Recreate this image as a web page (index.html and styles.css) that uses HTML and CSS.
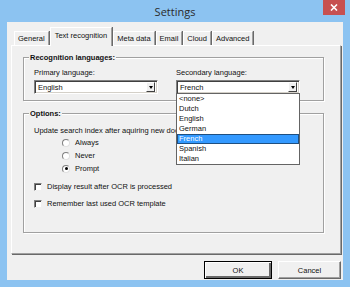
FILE: index.html
```html
<!DOCTYPE html>
<html lang="en">
<head>
  <meta charset="UTF-8">
  <meta name="viewport" content="width=device-width, initial-scale=1.0">
  <title>Settings</title>
  <link rel="stylesheet" href="styles.css">
</head>
<body>
  <div class="window">
    <div class="titlebar">
      <span class="title">Settings</span>
      <button class="close" aria-label="Close">
        <svg width="8" height="7" viewBox="0 0 8 7"><path d="M1 0.5 L7 6.5 M7 0.5 L1 6.5" stroke="#fff" stroke-width="1.6"/></svg>
      </button>
    </div>

    <div class="client">
      <div class="tabs">
        <div class="tab">General</div>
        <div class="tab active">Text recognition</div>
        <div class="tab">Meta data</div>
        <div class="tab">Email</div>
        <div class="tab">Cloud</div>
        <div class="tab">Advanced</div>
      </div>

      <div class="panel">
        <fieldset class="group languages">
          <legend>Recognition languages:</legend>
          <div class="lang-row">
            <div class="field">
              <label>Primary language:</label>
              <div class="combo">
                <span class="combo-value">English</span>
                <span class="combo-arrow"></span>
              </div>
            </div>
            <div class="field">
              <label>Secondary language:</label>
              <div class="combo open">
                <span class="combo-value">French</span>
                <span class="combo-arrow"></span>
                <ul class="dropdown">
                  <li>&lt;none&gt;</li>
                  <li>Dutch</li>
                  <li>English</li>
                  <li>German</li>
                  <li class="selected">French</li>
                  <li>Spanish</li>
                  <li>Italian</li>
                </ul>
              </div>
            </div>
          </div>
        </fieldset>

        <fieldset class="group options">
          <legend>Options:</legend>
          <p class="hint">Update search index after aquiring new documents:</p>
          <div class="radios">
            <label class="radio"><span class="dot"></span>Always</label>
            <label class="radio"><span class="dot"></span>Never</label>
            <label class="radio"><span class="dot checked"></span>Prompt</label>
          </div>
          <label class="check"><span class="box"></span>Display result after OCR is processed</label>
          <label class="check"><span class="box"></span>Remember last used OCR template</label>
        </fieldset>
      </div>

      <div class="actions">
        <button class="btn default">OK</button>
        <button class="btn">Cancel</button>
      </div>
    </div>
  </div>
</body>
</html>
```

FILE: styles.css
```css
/* Window frame */
body {
  margin: 0;
  background-color: #8cc3f1;
  font-family: "Liberation Sans", Arial, sans-serif;
  font-size: 7.5px;
  color: #111;
}

.window {
  width: 350px;
  height: 287px;
  display: flex;
  flex-direction: column;
}

.titlebar {
  height: 22px;
  display: grid;
  grid-template-columns: 1fr auto 1fr;
  align-items: center;
}

.title {
  grid-column: 2;
  font-family: "Open Sans", sans-serif;
  font-size: 11px;
  color: #2b2b2b;
  padding-top: 1px;
}

.close {
  grid-column: 3;
  justify-self: end;
  align-self: start;
  width: 22px;
  height: 15px;
  margin-right: 5px;
  padding: 0;
  border: none;
  background-color: #c75050;
  display: flex;
  align-items: center;
  justify-content: center;
}

.client {
  margin: 0 7px;
  height: 258px;
  background-color: #f0f0f0;
  padding: 5px 2px 0 4px;
  box-sizing: border-box;
}

/* Tabs */
.tabs {
  display: flex;
  align-items: flex-end;
  height: 18px;
  padding-left: 3px;
  position: relative;
  z-index: 1;
}

.tab {
  height: 13px;
  line-height: 13px;
  padding: 0 3px;
  border-top: 1px solid #fff;
  border-left: 1px solid #fff;
  border-right: 1px solid #a0a0a0;
  box-shadow: 1px 0 0 #696969;
  margin-right: 1px;
}

.tab.active {
  height: 18px;
  line-height: 16px;
  padding: 0 4px;
  margin-bottom: -1px;
  background-color: #f0f0f0;
}

.panel {
  height: 209px;
  box-sizing: border-box;
  border-top: 1px solid #fff;
  border-left: 1px solid #fff;
  border-right: 1px solid #a0a0a0;
  border-bottom: 1px solid #a0a0a0;
  box-shadow: 1px 1px 0 #696969;
  padding: 7px 16px 0 11px;
}

/* Group boxes */
.group {
  margin: 0;
  padding: 0 0 0 10px;
  border: 1px solid #a0a0a0;
  box-shadow: 1px 1px 0 #fff, inset 1px 1px 0 #fff;
  min-width: 0;
}

.group legend {
  font-weight: bold;
  padding: 0 1px;
  margin-left: -5px;
  line-height: 9px;
  background-color: #f0f0f0;
}

.languages {
  height: 48px;
  box-sizing: border-box;
}

.lang-row {
  display: flex;
  gap: 18px;
  padding-top: 6px;
}

.field label {
  display: block;
  line-height: 9px;
  margin-bottom: 3px;
}

.combo {
  position: relative;
  width: 124px;
  height: 14px;
  box-sizing: border-box;
  background-color: #fff;
  border-top: 1px solid #808080;
  border-left: 1px solid #808080;
  border-right: 1px solid #fff;
  border-bottom: 1px solid #fff;
  box-shadow: inset 1px 1px 0 #404040, inset -1px -1px 0 #d4d0c8;
  display: flex;
  align-items: center;
  justify-content: space-between;
  padding: 0 2px 0 3px;
}

.combo-arrow {
  width: 9px;
  height: 10px;
  box-sizing: border-box;
  background-color: #f0f0f0;
  border-top: 1px solid #fff;
  border-left: 1px solid #fff;
  border-right: 1px solid #404040;
  border-bottom: 1px solid #404040;
  display: flex;
  align-items: center;
  justify-content: center;
}

.combo-arrow::after {
  content: "";
  border-left: 2.5px solid transparent;
  border-right: 2.5px solid transparent;
  border-top: 3px solid #000;
}

.dropdown {
  position: absolute;
  top: 100%;
  left: -1px;
  width: 124px;
  box-sizing: border-box;
  margin: 0;
  padding: 0;
  list-style: none;
  background-color: #fff;
  border: 1px solid #646464;
  z-index: 5;
}

.dropdown li {
  height: 10px;
  line-height: 10px;
  padding-left: 2px;
}

.dropdown li.selected {
  background-color: #3399ff;
  color: #fff;
  box-shadow: inset 0 0 0 1px #1f4f80;
}

.options {
  margin-top: 8px;
  height: 124px;
  box-sizing: border-box;
}

.hint {
  margin: 8px 0 0;
  line-height: 9px;
  white-space: nowrap;
}

.radios {
  padding-left: 28px;
  margin-top: 1px;
}

.radio {
  display: flex;
  align-items: center;
  gap: 5px;
  height: 13px;
}

.dot {
  width: 8px;
  height: 8px;
  box-sizing: border-box;
  border-radius: 50%;
  background-color: #fff;
  border: 1px solid;
  border-color: #808080 #e0e0e0 #e0e0e0 #808080;
  display: flex;
  align-items: center;
  justify-content: center;
}

.dot.checked::after {
  content: "";
  width: 3px;
  height: 3px;
  border-radius: 50%;
  background-color: #000;
}

.check {
  display: flex;
  align-items: center;
  gap: 5px;
  height: 9px;
  margin-top: 7px;
}

.check + .check {
  margin-top: 8px;
}

.box {
  width: 8px;
  height: 8px;
  box-sizing: border-box;
  background-color: #fff;
  border: 1px solid;
  border-color: #808080 #f0f0f0 #f0f0f0 #808080;
  box-shadow: inset 1px 1px 0 #404040;
}

/* Dialog buttons */
.actions {
  display: flex;
  justify-content: flex-end;
  gap: 6px;
  margin-top: 7px;
}

.btn {
  height: 18px;
  width: 63px;
  padding: 0;
  font-family: "Liberation Sans", Arial, sans-serif;
  font-size: 7.5px;
  color: #111;
  background-color: #f0f0f0;
  border: 1px solid;
  border-color: #fff #696969 #696969 #fff;
  box-shadow: inset -1px -1px 0 #a0a0a0;
}

.btn.default {
  width: 68px;
  border: 1px solid #000;
  box-shadow: inset 1px 1px 0 #fff, inset -2px -2px 0 #696969;
}
```
